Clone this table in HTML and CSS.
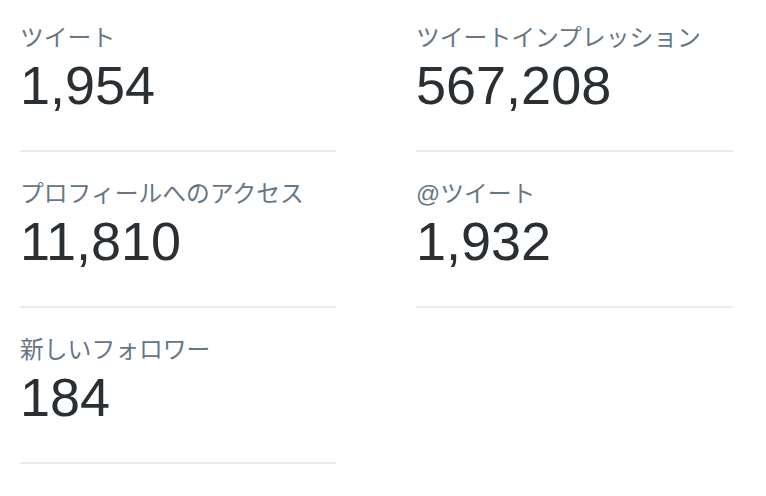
FILE: index.html
```html
<!DOCTYPE html>
<html lang="ja">
<head>
    <meta charset="UTF-8">
    <meta name="viewport" content="width=device-width, initial-scale=1.0">
    <title>ツイートアクティビティ</title>
    <link rel="stylesheet" href="styles.css">
</head>
<body>
    <div class="summary-grid">
        <div class="stat-cell">
            <div class="stat-label">ツイート</div>
            <div class="stat-value">1,954</div>
        </div>
        <div class="stat-cell">
            <div class="stat-label">ツイートインプレッション</div>
            <div class="stat-value">567,208</div>
        </div>
        <div class="stat-cell">
            <div class="stat-label">プロフィールへのアクセス</div>
            <div class="stat-value">11,810</div>
        </div>
        <div class="stat-cell">
            <div class="stat-label">@ツイート</div>
            <div class="stat-value">1,932</div>
        </div>
        <div class="stat-cell">
            <div class="stat-label">新しいフォロワー</div>
            <div class="stat-value">184</div>
        </div>
    </div>
</body>
</html>
```

FILE: styles.css
```css
* {
    box-sizing: border-box;
    margin: 0;
    padding: 0;
}

body {
    font-family: "Liberation Sans", "Noto Sans CJK JP", sans-serif;
    background-color: #fff;
}

.summary-grid {
    display: grid;
    grid-template-columns: 316px 317px;
    column-gap: 80px;
    row-gap: 28px;
    padding: 24px 0 0 20px;
}

.stat-cell {
    padding-bottom: 35px;
    border-bottom: 2px solid #e6ecf0;
}

.stat-label {
    font-size: 23.8px;
    line-height: 28px;
    color: #657786;
    margin-bottom: 3px;
}

.stat-value {
    font-size: 54px;
    line-height: 60px;
    color: #292f33;
}
```
